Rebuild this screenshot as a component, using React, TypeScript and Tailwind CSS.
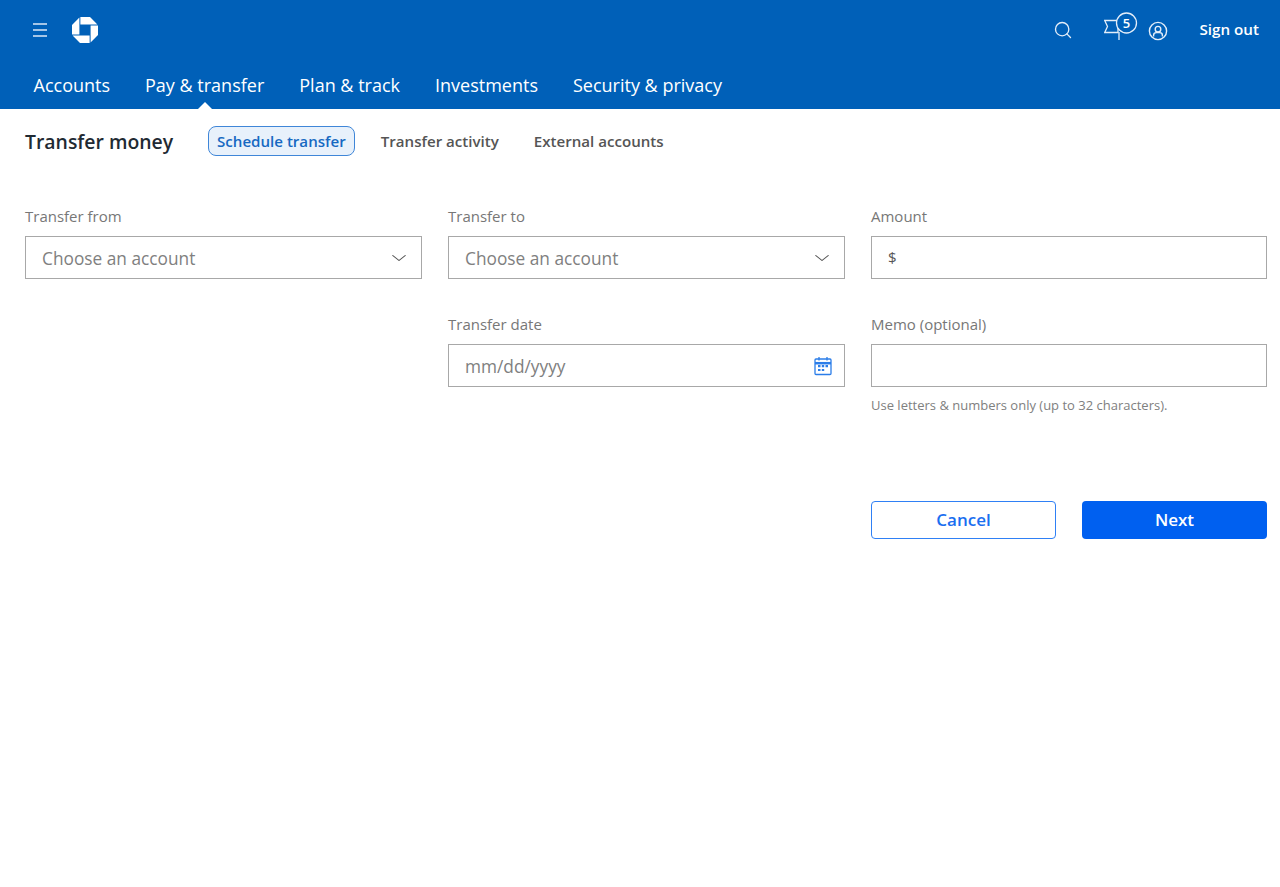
import React from "react";
import { ChevronDown, Search } from "lucide-react";

const navItems = ["Accounts", "Pay & transfer", "Plan & track", "Investments", "Security & privacy"];

const ChaseLogo = () => (
  <svg width="26" height="26" viewBox="0 0 26 26" fill="#fff">
    {[0, 90, 180, 270].map((r) => (
      <path key={r} d="M8.4 0H18L25.4 7.4H8.4Z" transform={`rotate(${r} 13 13)`} />
    ))}
  </svg>
);

const MenuIcon = () => (
  <svg width="16" height="14" viewBox="0 0 16 14" fill="none" stroke="#dce8f6" strokeWidth="1.6">
    <path d="M1 1H15M1 7H15M1 13H15" />
  </svg>
);

const FlagBadge = () => (
  <svg width="34" height="30" viewBox="0 0 34 30" fill="none" stroke="#e4eef9" strokeWidth="1.3">
    <path d="M0.7 8.5H14V20.5H0.7L3.5 14.5Z" />
    <path d="M15 20V28" />
    <circle cx="22.5" cy="11" r="10" fill="#0060b8" />
    <text x="22.5" y="15.5" fontSize="13" fontWeight="600" fill="#fff" stroke="none" textAnchor="middle">5</text>
  </svg>
);

const ProfileIcon = () => (
  <svg width="20" height="20" viewBox="0 0 20 20" fill="none" stroke="#e4eef9" strokeWidth="1.4">
    <circle cx="10" cy="10" r="8.6" />
    <circle cx="10" cy="8.2" r="2.8" />
    <path d="M5.6 15.6V14.2C5.6 12.6 7 11.6 8.4 11.6H11.6C13 11.6 14.4 12.6 14.4 14.2V15.6" />
  </svg>
);

const CalendarIcon = () => (
  <svg width="18" height="20" viewBox="0 0 18 20" fill="none" stroke="#2b7de9" strokeWidth="1.3">
    <rect x="1" y="3" width="16" height="15.5" rx="1" />
    <path d="M1 7.2H17" strokeWidth="2.5" />
    <path d="M5 1V4.5M13 1V4.5" />
    <path d="M4 10.2H6.5M7.8 10.2H10.2M11.5 10.2H14M4 14H6.5M7.8 14H10.2" strokeWidth="2.2" />
  </svg>
);

const Field = ({ label, children }: { label: string; children: React.ReactNode }) => (
  <div>
    <label className="block text-[15px] leading-[20px] text-[#777] mb-[10px]">{label}</label>
    {children}
  </div>
);

const boxClass = "h-[43px] border-[1.5px] border-[#a8a8a8] flex items-center justify-between";

const SelectBox = () => (
  <div className={`${boxClass} pl-[16px] pr-[12px] text-[17.3px] text-[#808080]`}>
    <span className="mt-[2px]">Choose an account</span>
    <ChevronDown size={20} strokeWidth={1.2} className="text-[#555] scale-x-125" />
  </div>
);

export default function App() {
  return (
    <div className="min-h-[887px] bg-white font-['Open_Sans',sans-serif]">
      <header className="bg-[#0060b8] h-[109px] text-white">
        <div className="h-[60px] flex items-center pl-[32px] pr-[21px]">
          <MenuIcon />
          <div className="ml-[24px]">
            <ChaseLogo />
          </div>
          <div className="ml-auto flex items-center">
            <Search size={20} strokeWidth={1.6} className="text-[#e4eef9]" />
            <div className="ml-[31px] mb-[6px]">
              <FlagBadge />
            </div>
            <div className="ml-[10px] mt-[1px]">
              <ProfileIcon />
            </div>
            <span className="ml-[31px] mb-[1px] text-[15.2px] font-semibold">Sign out</span>
          </div>
        </div>
        <nav className="flex gap-[35px] pl-[33.5px] text-[18px] font-medium leading-[50px]">
          {navItems.map((item, i) => (
            <a key={item} className="relative h-[49px]">
              {item}
              {i === 1 && (
                <span className="absolute left-1/2 -translate-x-1/2 bottom-0 w-0 h-0 border-x-[7px] border-x-transparent border-b-[7px] border-b-white" />
              )}
            </a>
          ))}
        </nav>
      </header>

      <div className="flex items-center pl-[25px] pt-[16px]">
        <h1 className="text-[19.4px] font-semibold text-[#1f2a33] w-[183px] mt-[2px]">Transfer money</h1>
        <div className="flex items-center gap-[35px] text-[15.1px] font-semibold text-[#555]">
          <span className="h-[30px] px-[8px] pt-[2px] flex items-center rounded-[8px] border-[1.5px] border-[#3f86d8] bg-[#e8f1fb] text-[#1769c2] -mr-[9px]">
            Schedule transfer
          </span>
          <span className="mt-[2px]">Transfer activity</span>
          <span className="mt-[2px]">External accounts</span>
        </div>
      </div>

      <main className="pl-[25px] pr-[13px] pt-[50px]">
        <div className="grid grid-cols-[397px_397px_396px] gap-x-[26px] gap-y-[35px]">
          <Field label="Transfer from">
            <SelectBox />
          </Field>
          <Field label="Transfer to">
            <SelectBox />
          </Field>
          <Field label="Amount">
            <div className={`${boxClass} pl-[16px] text-[15px] text-[#555]`}>$</div>
          </Field>
          <div />
          <Field label="Transfer date">
            <div className={`${boxClass} pl-[16px] pr-[12px] text-[17.3px] text-[#808080]`}>
              <span className="mt-[2px]">mm/dd/yyyy</span>
              <CalendarIcon />
            </div>
          </Field>
          <Field label="Memo (optional)">
            <div className={boxClass} />
            <p className="mt-[9px] text-[13px] leading-[18px] text-[#808080]">
              Use letters &amp; numbers only (up to 32 characters).
            </p>
          </Field>
        </div>
        <div className="flex justify-end gap-[26px] mt-[87px]">
          <button className="w-[185px] h-[38px] rounded-[4px] border-[1.5px] border-[#2f80f5] bg-white text-[#1a6ef0] text-[17px] font-semibold">
            Cancel
          </button>
          <button className="w-[185px] h-[38px] rounded-[4px] bg-[#0060f0] text-white text-[17px] font-semibold">
            Next
          </button>
        </div>
      </main>
    </div>
  );
}
